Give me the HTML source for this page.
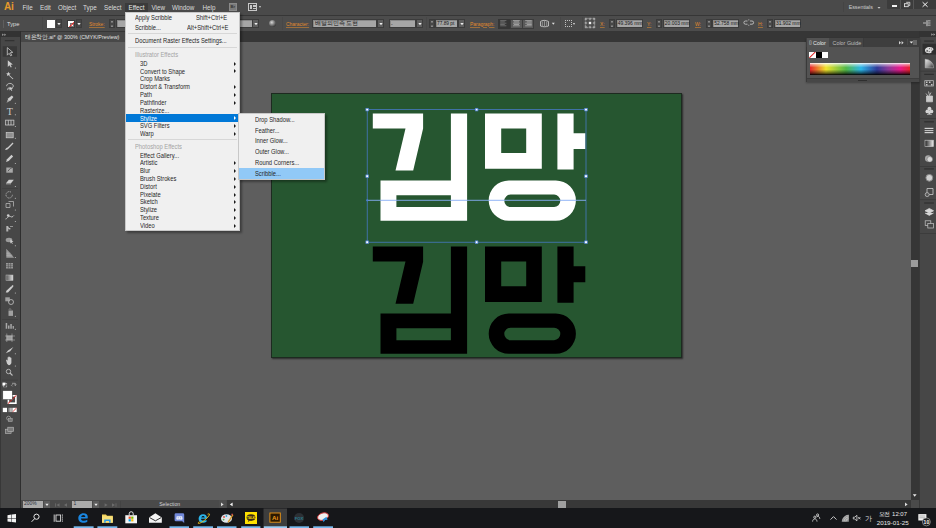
<!DOCTYPE html>
<html><head><meta charset="utf-8">
<style>
*{margin:0;padding:0;box-sizing:border-box}
html,body{width:936px;height:528px;overflow:hidden;background:#5e5e5e;font-family:"Liberation Sans",sans-serif}
.a{position:absolute}
.t{position:absolute;white-space:nowrap;line-height:1}
#menubar{left:0;top:0;width:936px;height:15.5px;background:#4a4a4a;border-bottom:1.3px solid #363636}
.mi{position:absolute;top:4.5px;font-size:6.3px;color:#dcdcdc;line-height:1}
#ctrl{left:0;top:15.5px;width:936px;height:16px;background:#4c4c4c;border-bottom:.6px solid #444}
.ol{color:#e08a2e;text-decoration:underline;text-decoration-color:rgba(224,138,46,.55);font-size:5.5px;transform:scaleX(.9);transform-origin:0 0}
.inp{position:absolute;background:#b8b8b8;height:9px;top:19px}
.dd{position:absolute;background:#464646;height:9px;top:19px;width:6px}
.dd:after{content:"";position:absolute;left:1.5px;top:3.5px;border-left:1.5px solid transparent;border-right:1.5px solid transparent;border-top:2px solid #ddd}
#canvas{left:21px;top:41.6px;width:890px;height:458px;background:#5e5e5e}
#tabbar{left:20px;top:31px;width:900px;height:11px;background:#363636}
#tab{left:21px;top:31.8px;width:110px;height:9.8px;background:#484848}
#tools{left:0;top:31px;width:21px;height:477px;background:#474747;border-left:1px solid #383838;border-right:1.4px solid #2e2e2e}
#toolhdr{left:0;top:31px;width:20px;height:6px;background:#333}
#artboard{left:271px;top:93px;width:411px;height:264.7px;background:#265630;border:1px solid #1d2a20;box-shadow:1px 1px 1.5px rgba(0,0,0,.55)}
#status{left:21px;top:500px;width:890px;height:8px;background:#4a4a4a}
#taskbar{left:0;top:508px;width:936px;height:20px;background:#16171a}
#dock{left:919px;top:31px;width:17px;height:477px;background:#474747;border-left:1px solid #383838}
#vscroll{left:911px;top:42px;width:9px;height:458px;background:#363636;border-right:1px solid #2c2c2c}
#menu{left:125px;top:12px;width:115px;height:219px;background:#f0f0f0;border:1px solid #c8c8c8;box-shadow:2px 2px 2px rgba(0,0,0,.35)}
.m{position:absolute;font-size:6.3px;color:#262626;line-height:1;white-space:nowrap;transform:scaleX(.92);transform-origin:0 0}
.g{color:#a3a3a3}
.arr{position:absolute;left:109px;width:0;height:0;border-top:2px solid transparent;border-bottom:2px solid transparent;border-left:2px solid #222}
.sep{position:absolute;left:3px;width:107px;height:1px;background:#d4d4d4}
#sub{left:238px;top:113px;width:87px;height:67px;background:#f0f0f0;border:1px solid #c8c8c8;box-shadow:2px 2px 2px rgba(0,0,0,.35)}
</style></head><body>

<!-- menubar -->
<div id="menubar" class="a"></div>
<div class="t" style="left:4px;top:2px;font-size:10px;font-weight:bold;color:#e59a2c;letter-spacing:-0.3px">Ai</div>
<div class="mi" style="left:22.5px">File</div>
<div class="mi" style="left:40px">Edit</div>
<div class="mi" style="left:58px">Object</div>
<div class="mi" style="left:83px">Type</div>
<div class="mi" style="left:104px">Select</div>
<div class="a" style="left:125px;top:3px;width:23px;height:9px;background:#3b3b3b"></div>
<div class="mi" style="left:128.5px;color:#e8e8e8">Effect</div>
<div class="mi" style="left:151.5px">View</div>
<div class="mi" style="left:172px">Window</div>
<div class="mi" style="left:202.5px">Help</div>
<div class="a" style="left:229px;top:3px;width:8px;height:8px;background:#7a7a7a;border:1px solid #8a8a8a"></div>
<div class="t" style="left:230.5px;top:5px;font-size:4px;color:#333;font-weight:bold">Br</div>
<div class="a" style="left:248px;top:3px;width:9px;height:8px;border:1px solid #c8c8c8"></div>
<div class="a" style="left:250px;top:5px;width:2px;height:4px;background:#c8c8c8"></div>
<div class="a" style="left:253px;top:5px;width:3px;height:1.5px;background:#c8c8c8"></div>
<div class="a" style="left:253px;top:7.5px;width:3px;height:1.5px;background:#c8c8c8"></div>
<div class="a" style="left:258.5px;top:6px;border-left:1.5px solid transparent;border-right:1.5px solid transparent;border-top:2px solid #ccc"></div>
<div class="a" style="left:843px;top:2px;width:1px;height:10px;background:#444"></div>
<div class="t" style="left:848.7px;top:4.6px;font-size:5.3px;color:#cfcfcf">Essentials</div>
<svg class="a" style="left:877px;top:6px" width="4" height="4" viewBox="0 0 4 4"><path d="M.5 1H3.5L2 2.8Z" fill="#ccc"/></svg>
<div class="a" style="left:887px;top:0;width:49px;height:9px;background:#3c3c3c;border-radius:0 0 0 1px"></div>
<div class="a" style="left:900px;top:0;width:1px;height:9px;background:#555"></div>
<div class="a" style="left:913px;top:0;width:1px;height:9px;background:#555"></div>
<div class="a" style="left:892px;top:5px;width:5px;height:1.5px;background:#f0f0f0"></div>
<svg class="a" style="left:903px;top:1px" width="9" height="7" viewBox="903 1 9 7"><path d="M906.2 2.3h3.6v3.2h-1.2" fill="none" stroke="#eee" stroke-width=".8"/><rect x="904.4" y="3.7" width="3.8" height="3" fill="#4a4a4a" stroke="#eee" stroke-width=".8"/></svg>
<svg class="a" style="left:921px;top:1px" width="8" height="7" viewBox="921 1 8 7"><path d="M922.6 2.2l5 4.6m0-4.6l-5 4.6" stroke="#f4f4f4" stroke-width="1"/></svg>

<!-- control bar -->
<div id="ctrl" class="a"></div>
<div class="a" style="left:2.5px;top:19.6px;width:1.5px;height:8px;background:#3a3a3a;border-right:.5px solid #5e5e5e"></div>
<div class="t" style="left:7px;top:21.8px;font-size:5.8px;color:#dedede">Type</div>
<div class="a" style="left:42px;top:17px;width:1px;height:13px;background:#474747"></div>
<div class="a" style="left:47px;top:19.9px;width:8.1px;height:8.1px;background:#fff"></div>
<div class="a" style="left:55.8px;top:18.8px;width:6.2px;height:9.3px;background:#464646;border:1px solid #3c3c3c"></div><svg class="a" style="left:56.9px;top:21.5px" width="4" height="4" viewBox="0 0 4 4"><path d="M.3 1H3.7L2 3.2Z" fill="#eee"/></svg>
<div class="a" style="left:67px;top:19.8px;width:8.3px;height:8.3px;background:#fff;overflow:hidden;border:.5px solid #3a3a3a"><div class="a" style="left:2.2px;top:2.2px;width:3.6px;height:3.6px;border:.6px solid #777"></div><div class="a" style="left:-2px;top:3.7px;width:12px;height:1px;background:#e0201e;transform:rotate(-45deg)"></div></div>
<div class="a" style="left:75.7px;top:18.8px;width:6.3px;height:9.3px;background:#464646;border:1px solid #3c3c3c"></div><svg class="a" style="left:76.85000000000001px;top:21.5px" width="4" height="4" viewBox="0 0 4 4"><path d="M.3 1H3.7L2 3.2Z" fill="#eee"/></svg>
<div class="t ol" style="left:89.3px;top:21.5px">Stroke:</div>
<div class="a" style="left:108.8px;top:19px;width:6px;height:9px;background:#474747;border:1px solid #3a3a3a"></div><svg class="a" style="left:109.8px;top:19.8px" width="4" height="3" viewBox="0 0 4 3"><path d="M.9 2.3H3.1L2 1Z" fill="#e0e0e0"/></svg><svg class="a" style="left:109.8px;top:24.6px" width="4" height="3" viewBox="0 0 4 3"><path d="M.9 .7H3.1L2 2Z" fill="#e0e0e0"/></svg>
<div class="a" style="left:115.5px;top:18.8px;width:137px;height:9.3px;background:#a6a6a6;border:1px solid #3c3c3c;box-shadow:inset 1px 1px 0 #888"></div>
<div class="a" style="left:252.4px;top:18.8px;width:7px;height:9.3px;background:#5e5e5e;border:1px solid #3c3c3c"></div><svg class="a" style="left:253.9px;top:21.5px" width="4" height="4" viewBox="0 0 4 4"><path d="M.3 1H3.7L2 3.2Z" fill="#eee"/></svg>
<div class="a" style="left:269.3px;top:19.6px;width:7.2px;height:7.2px;border-radius:50%;background:radial-gradient(circle at 40% 35%,#d8d8d8 0,#8a8a8a 35%,#3a3a3a 75%)"></div>
<div class="a" style="left:281.5px;top:17px;width:1px;height:13px;background:#474747"></div>
<div class="t ol" style="left:285.7px;top:21.5px">Character:</div>
<div class="a" style="left:312.3px;top:18.8px;width:65px;height:9.3px;background:#a6a6a6;border:1px solid #3c3c3c;box-shadow:inset 1px 1px 0 #888"></div>
<div class="t" style="left:314.9px;top:21.3px;font-size:5.6px;color:#151515">배달의민족 도현</div>
<div class="a" style="left:377px;top:18.8px;width:7.4px;height:9.3px;background:#5e5e5e;border:1px solid #3c3c3c"></div><svg class="a" style="left:378.7px;top:21.5px" width="4" height="4" viewBox="0 0 4 4"><path d="M.3 1H3.7L2 3.2Z" fill="#eee"/></svg>
<div class="a" style="left:388.7px;top:18.8px;width:27.5px;height:9.3px;background:#a6a6a6;border:1px solid #3c3c3c;box-shadow:inset 1px 1px 0 #888"></div>
<div class="t" style="left:391px;top:21.8px;font-size:5px;color:#1e1e1e">-</div>
<div class="a" style="left:416px;top:18.8px;width:7.4px;height:9.3px;background:#5e5e5e;border:1px solid #3c3c3c"></div><svg class="a" style="left:417.7px;top:21.5px" width="4" height="4" viewBox="0 0 4 4"><path d="M.3 1H3.7L2 3.2Z" fill="#eee"/></svg>
<div class="a" style="left:426.3px;top:17px;width:1px;height:13px;background:#474747"></div>
<div class="a" style="left:428.6px;top:19px;width:6px;height:9px;background:#474747;border:1px solid #3a3a3a"></div><svg class="a" style="left:429.6px;top:19.8px" width="4" height="3" viewBox="0 0 4 3"><path d="M.9 2.3H3.1L2 1Z" fill="#e0e0e0"/></svg><svg class="a" style="left:429.6px;top:24.6px" width="4" height="3" viewBox="0 0 4 3"><path d="M.9 .7H3.1L2 2Z" fill="#e0e0e0"/></svg>
<div class="a" style="left:435.2px;top:18.8px;width:23px;height:9.3px;background:#a6a6a6;border:1px solid #3c3c3c;box-shadow:inset 1px 1px 0 #888"></div>
<div class="t" style="left:437px;top:21.6px;font-size:4.8px;color:#161616">77.89 pt</div>
<div class="a" style="left:458px;top:18.8px;width:7px;height:9.3px;background:#5e5e5e;border:1px solid #3c3c3c"></div><svg class="a" style="left:459.5px;top:21.5px" width="4" height="4" viewBox="0 0 4 4"><path d="M.3 1H3.7L2 3.2Z" fill="#eee"/></svg>
<div class="t ol" style="left:469.9px;top:21.5px">Paragraph:</div>
<div class="a" style="left:497.6px;top:18.5px;width:36.8px;height:10.1px;background:#5a5a5a;border:1px solid #3c3c3c"></div>
<div class="a" style="left:497.6px;top:18.5px;width:12.4px;height:10.1px;background:#363636"></div>
<svg class="a" style="left:497px;top:18px" width="38" height="11" viewBox="497 18 38 11"><g stroke-width=".55"><path d="M500.2 20.6h6.2M500.2 21.9h4.6M500.2 23.2h6.2M500.2 24.5h4.6M500.2 25.8h6.2" stroke="#999"/><path d="M513 20.6h6.8M513.8 21.9h5.2M513 23.2h6.8M513.8 24.5h5.2M513 25.8h6.8" stroke="#d4d4d4"/><path d="M525.2 20.6h6.6M526.8 21.9h5M525.2 23.2h6.6M526.8 24.5h5M525.2 25.8h6.6" stroke="#d4d4d4"/></g></svg><div class="a" style="left:510px;top:18.5px;width:1px;height:10.1px;background:#3c3c3c"></div><div class="a" style="left:522.2px;top:18.5px;width:1px;height:10.1px;background:#3c3c3c"></div>



<svg class="a" style="left:538px;top:17px" width="20" height="13" viewBox="538 17 20 13"><path d="M540.5 21.5c1.5-1.5 5.6-1.5 8 0v4.5c-2.5 1-5.5 1-8 0z" fill="none" stroke="#d0d0d0" stroke-width=".8"/><path d="M542.3 21.5v4.6M544.5 21v5.2M546.7 21.5v4.6" stroke="#d0d0d0" stroke-width=".5"/><path d="M551.8 22.8h3l-1.5 2z" fill="#ddd"/></svg>
<div class="a" style="left:560px;top:17px;width:1px;height:13px;background:#474747"></div>
<div class="a" style="left:564.6px;top:19.6px;width:7.5px;height:7.5px;border:1px dotted #c0c0c0"></div>
<div class="a" style="left:573.3px;top:22.6px;border-left:1.5px solid transparent;border-right:1.5px solid transparent;border-top:2px solid #ddd"></div>
<div class="a" style="left:582px;top:17px;width:1px;height:13px;background:#474747"></div>
<svg class="a" style="left:584px;top:17px" width="12" height="12" viewBox="584 17 12 12"><g fill="none" stroke="#c8c8c8" stroke-width=".6"><rect x="585.3" y="18.3" width="9.4" height="9.4" stroke-dasharray=".9 .6"/><circle cx="586" cy="19" r=".9"/><circle cx="590" cy="19" r=".9"/><circle cx="594" cy="19" r=".9"/><circle cx="586" cy="23" r=".9"/><circle cx="594" cy="23" r=".9"/><circle cx="586" cy="27" r=".9"/><circle cx="590" cy="27" r=".9"/><circle cx="594" cy="27" r=".9"/></g><rect x="588.8" y="21.8" width="2.4" height="2.4" fill="#eee"/></svg>
<div class="t ol" style="left:599.8px;top:21.5px">X:</div>
<div class="a" style="left:608.5px;top:19px;width:6px;height:9px;background:#474747;border:1px solid #3a3a3a"></div><svg class="a" style="left:609.5px;top:19.8px" width="4" height="3" viewBox="0 0 4 3"><path d="M.9 2.3H3.1L2 1Z" fill="#e0e0e0"/></svg><svg class="a" style="left:609.5px;top:24.6px" width="4" height="3" viewBox="0 0 4 3"><path d="M.9 .7H3.1L2 2Z" fill="#e0e0e0"/></svg>
<div class="a" style="left:615.7px;top:18.8px;width:27.4px;height:9.3px;background:#a6a6a6;border:1px solid #3c3c3c;box-shadow:inset 1px 1px 0 #888"></div>
<div class="t" style="left:617.7px;top:21.6px;font-size:4.95px;color:#161616">49.396 mm</div>
<div class="t ol" style="left:647.1px;top:21.5px">Y:</div>
<div class="a" style="left:656px;top:19px;width:6px;height:9px;background:#474747;border:1px solid #3a3a3a"></div><svg class="a" style="left:657.0px;top:19.8px" width="4" height="3" viewBox="0 0 4 3"><path d="M.9 2.3H3.1L2 1Z" fill="#e0e0e0"/></svg><svg class="a" style="left:657.0px;top:24.6px" width="4" height="3" viewBox="0 0 4 3"><path d="M.9 .7H3.1L2 2Z" fill="#e0e0e0"/></svg>
<div class="a" style="left:662.8px;top:18.8px;width:27.4px;height:9.3px;background:#a6a6a6;border:1px solid #3c3c3c;box-shadow:inset 1px 1px 0 #888"></div>
<div class="t" style="left:664.8px;top:21.6px;font-size:4.95px;color:#161616">20.003 mm</div>
<div class="t ol" style="left:694.7px;top:21.5px">W:</div>
<div class="a" style="left:705.5px;top:19px;width:6px;height:9px;background:#474747;border:1px solid #3a3a3a"></div><svg class="a" style="left:706.5px;top:19.8px" width="4" height="3" viewBox="0 0 4 3"><path d="M.9 2.3H3.1L2 1Z" fill="#e0e0e0"/></svg><svg class="a" style="left:706.5px;top:24.6px" width="4" height="3" viewBox="0 0 4 3"><path d="M.9 .7H3.1L2 2Z" fill="#e0e0e0"/></svg>
<div class="a" style="left:712.2px;top:18.8px;width:26.9px;height:9.3px;background:#a6a6a6;border:1px solid #3c3c3c;box-shadow:inset 1px 1px 0 #888"></div>
<div class="t" style="left:714.2px;top:21.6px;font-size:4.95px;color:#161616">52.758 mm</div>
<div class="t ol" style="left:758.2px;top:21.5px">H:</div>
<div class="a" style="left:767.2px;top:19px;width:6px;height:9px;background:#474747;border:1px solid #3a3a3a"></div><svg class="a" style="left:768.2px;top:19.8px" width="4" height="3" viewBox="0 0 4 3"><path d="M.9 2.3H3.1L2 1Z" fill="#e0e0e0"/></svg><svg class="a" style="left:768.2px;top:24.6px" width="4" height="3" viewBox="0 0 4 3"><path d="M.9 .7H3.1L2 2Z" fill="#e0e0e0"/></svg>
<div class="a" style="left:773.9px;top:18.8px;width:27.6px;height:9.3px;background:#a6a6a6;border:1px solid #3c3c3c;box-shadow:inset 1px 1px 0 #888"></div>
<div class="t" style="left:775.9px;top:21.6px;font-size:4.95px;color:#161616">31.902 mm</div>
<svg class="a" style="left:743px;top:18px" width="12" height="11" viewBox="743 18 12 11"><g fill="none" stroke="#d0d0d0" stroke-width=".8"><path d="M747.5 21h-2a1.6 1.6 0 0 0 0 3.2h2M750 21h2a1.6 1.6 0 0 1 0 3.2h-2"/><path d="M748.8 19.2v1.3M748.8 24.7v1.3" stroke-width=".6"/></g></svg>
<svg class="a" style="left:920px;top:18px" width="14" height="11" viewBox="920 18 14 11"><g fill="#d8d8d8"><rect x="923" y="22.6" width="3" height=".8"/><rect x="926.5" y="20.2" width="1" height="6"/><rect x="928" y="20.5" width="2.5" height=".8"/><rect x="928" y="22.6" width="2.5" height=".8"/><rect x="928" y="24.7" width="2.5" height=".8"/></g></svg>
<!-- canvas -->
<div id="canvas" class="a"></div>
<div id="artboard" class="a"></div>

<div id="tabbar" class="a"></div>
<div id="tab" class="a"></div>
<div class="t" style="left:25.3px;top:34.9px;font-size:5.7px;color:#e2e2e2;transform:scaleX(.95);transform-origin:0 0">태은착안.ai* @ 300% (CMYK/Preview)</div>
<div id="vscroll" class="a"></div>
<div class="a" style="left:910.8px;top:259.7px;width:7.7px;height:7.4px;background:#9c9c9c"></div>
<div id="status" class="a"></div>
<div class="a" style="left:22.6px;top:500.9px;width:20.6px;height:6.9px;background:#ababab"></div>
<div class="t" style="left:24px;top:502.3px;font-size:4.9px;color:#2a3040">200%</div>
<div class="a" style="left:43.8px;top:500.9px;width:6.2px;height:6.9px;background:#5c5c5c"></div>
<svg class="a" style="left:44.9px;top:502.6px" width="4" height="4" viewBox="0 0 4 4"><path d="M.3 .8H3.7L2 3Z" fill="#eee"/></svg>
<svg class="a" style="left:54px;top:501.5px" width="64" height="6" viewBox="54 501.5 64 6"><g fill="#6c6c6c"><rect x="55" y="502.8" width=".8" height="3.4"/><path d="M59.5 502.8v3.4l-3-1.7z"/><path d="M67 502.8v3.4l-3-1.7z"/><path d="M104.6 502.8v3.4l3-1.7z"/><path d="M112 502.8v3.4l3-1.7z"/><rect x="115.6" y="502.8" width=".8" height="3.4"/></g></svg>
<div class="a" style="left:72px;top:500.9px;width:20px;height:6.9px;background:#ababab"></div>
<div class="t" style="left:73.5px;top:502.3px;font-size:4.9px;color:#2a3040">1</div>
<div class="a" style="left:92.8px;top:500.9px;width:6.2px;height:6.9px;background:#5c5c5c"></div>
<svg class="a" style="left:93.9px;top:502.6px" width="4" height="4" viewBox="0 0 4 4"><path d="M.3 .8H3.7L2 3Z" fill="#eee"/></svg>
<div class="a" style="left:120px;top:500.5px;width:1px;height:7px;background:#444"></div>
<div class="t" style="left:159.2px;top:502.2px;font-size:5.1px;color:#d2d2d2">Selection</div>
<div class="a" style="left:218.5px;top:500px;width:7.5px;height:7.7px;background:#4e4e4e"></div>
<svg class="a" style="left:220px;top:502px" width="12" height="5" viewBox="220 502 12 5"><path d="M221 502.6v3.6l2.6-1.8z" fill="#ddd"/><path d="M232 502.4v4l-2.8-2z" fill="#f4f4f4"/></svg>
<div class="a" style="left:226.8px;top:499.6px;width:684.2px;height:8.4px;background:#383838"></div>
<svg class="a" style="left:229px;top:502px" width="5" height="5" viewBox="229 502 5 5"><path d="M232.6 502.5v3.8l-2.8-1.9z" fill="#f4f4f4"/></svg>
<div class="a" style="left:557.9px;top:500.6px;width:8.1px;height:7.2px;background:#a0a0a0"></div>
<svg class="a" style="left:904px;top:502px" width="5" height="5" viewBox="904 502 5 5"><path d="M905 502.6v3.6l2.6-1.8z" fill="#ddd"/></svg>
<div class="a" style="left:911px;top:499.6px;width:9px;height:8.4px;background:#4a4a4a"></div>
<svg class="a" style="left:912px;top:493px" width="6" height="5" viewBox="912 493 6 5"><path d="M912.8 494.2h3.8l-1.9 2.6z" fill="#e8e8e8"/></svg>
<div id="dock" class="a"></div>
<div class="a" style="left:919px;top:31px;width:17px;height:6px;background:#333"></div>
<div id="tools" class="a"></div>
<div id="toolhdr" class="a"></div>

<svg class="a" style="left:0;top:0" width="936" height="528" viewBox="0 0 936 528">
  <g id="kim" fill="#fff" fill-rule="evenodd">
    <path d="M372.8 113.4H423.1V128.6L413.2 170.6H395.5L405.5 128.5H372.8Z"/>
    <path d="M450.9 113.4H467.1V220.7H380.5V180.4H450.9ZM396.4 195.2V207.1H450.9V195.2Z"/>
    <path d="M485 113.4H541.8V168.8H485ZM501.2 128.4V153.1H526.2V128.4Z"/>
    <path d="M557.4 113.4H573.6V133.2H585.3V149.1H573.6V169.6H557.4Z"/>
    <path d="M508.85 180.4H555.75A20.15 20.15 0 0 1 555.75 220.7H508.85A20.15 20.15 0 0 1 508.85 180.4ZM510.55 194.6A6.25 6.25 0 0 0 510.55 207.1H554.05A6.25 6.25 0 0 0 554.05 194.6Z"/>
  </g>
  <g fill="#000" fill-rule="evenodd" transform="translate(0 133.1)">
    <path d="M372.8 113.4H423.1V128.6L413.2 170.6H395.5L405.5 128.5H372.8Z"/>
    <path d="M450.9 113.4H467.1V220.7H380.5V180.4H450.9ZM396.4 195.2V207.1H450.9V195.2Z"/>
    <path d="M485 113.4H541.8V168.8H485ZM501.2 128.4V153.1H526.2V128.4Z"/>
    <path d="M557.4 113.4H573.6V133.2H585.3V149.1H573.6V169.6H557.4Z"/>
    <path d="M508.85 180.4H555.75A20.15 20.15 0 0 1 555.75 220.7H508.85A20.15 20.15 0 0 1 508.85 180.4ZM510.55 194.6A6.25 6.25 0 0 0 510.55 207.1H554.05A6.25 6.25 0 0 0 554.05 194.6Z"/>
  </g>

  <g stroke="#4a7fd8" stroke-width="0.7" fill="none">
    <rect x="367.2" y="109.6" width="218.8" height="132.6"/>
    <line x1="367.2" y1="200.3" x2="586" y2="200.3" stroke="#86adf6" stroke-width="0.9"/>
  </g>
  <g fill="#fff" stroke="#4a7fd8" stroke-width="0.7">
    <rect x="365.9" y="108.3" width="2.6" height="2.6"/>
    <rect x="475.3" y="108.3" width="2.6" height="2.6"/>
    <rect x="584.7" y="108.3" width="2.6" height="2.6"/>
    <rect x="365.9" y="174.9" width="2.6" height="2.6"/>
    <rect x="584.7" y="174.9" width="2.6" height="2.6"/>
    <rect x="365.9" y="240.9" width="2.6" height="2.6"/>
    <rect x="475.3" y="240.9" width="2.6" height="2.6"/>
    <rect x="584.7" y="240.9" width="2.6" height="2.6"/>
  </g>
  <circle cx="367.2" cy="200.3" r="1.1" fill="#4a7fd8"/>
</svg>



<!-- tool icons -->
<svg class="a" style="left:0;top:31px" width="20" height="420" viewBox="0 31 20 420">
  <path d="M2.4 33.4v2.6l1.3-1.3zM4.5 33.4v2.6l1.3-1.3z" fill="#c8c8c8"/>
  <rect x="4.8" y="40.2" width="9.6" height="1" fill="#2d2d2d"/>
  <rect x="2.7" y="46.2" width="14.3" height="10.6" fill="#383838"/>
  <g fill="#cdcdcd" stroke="none">
    <path d="M7.3 47.6v7.6l1.8-1.9 1.6 2.6 1.1-.6-1.5-2.6 2.5-.3z" fill="none" stroke="#c8c8c8" stroke-width=".8"/>
    <path d="M7.8 60.2v6.8l1.6-1.7 1.4 2.3 1-.6-1.3-2.3 2.3-.2z"/>
    <path d="M8.4 71.8l.7 1.5 1.6.2-1.2 1 .4 1.6-1.5-.8-1.4.8.3-1.6-1.2-1 1.6-.2z"/>
    <path d="M9.8 75.5l3.6 3.2-.6.6-3.5-3.2z"/>
    <path d="M6.6 86.2c0-1.8 1.6-2.8 3.3-2.8s3.4 1 3.4 2.6-1.6 2.4-3.4 2.4c-.8 0-1.3-.2-1.7-.5l-.6 2.2" fill="none" stroke="#c2c2c2" stroke-width=".9"/>
    <path d="M9.5 86.8l3.6 2-1.7.3.9 1.6-.7.4-.9-1.6-1.2 1.1z"/>
    <path d="M6.6 102.8l1.8-4.6 3.4-2.8 1.6 1.6-2.8 3.4z"/>
    <path d="M6.6 102.8l2.5-2.5" stroke="#484848" stroke-width=".5"/>
    <text x="9.8" y="115" font-size="10" font-family="Liberation Serif" text-anchor="middle" fill="#cdcdcd">T</text>
    <path d="M5.2 120.2h9M5.2 125h9M5.6 120.2v4.8M8.3 120.2v4.8M11 120.2v4.8M13.8 120.2v4.8" stroke="#cdcdcd" stroke-width=".8" fill="none"/>
    <rect x="6.2" y="132.6" width="7" height="5.2" fill="#8f8f8f" stroke="#cdcdcd" stroke-width=".7"/>
    <path d="M5.2 150c1.6.1 2.8-.4 3.4-1.4l4.9-5.2-.9-.8-5 5c-1.2.2-2 .9-2.4 2.4z"/>
    <path d="M6 162l1-2.8 4.5-4.4 1.6 1.6-4.4 4.5z"/>
    <path d="M6.3 167.5h6.5v5.2H6.3z" fill="#a8a8a8"/>
    <path d="M8 171.2c1.5-2.6 3.4-3.3 5.6-4.2" stroke="#484848" stroke-width=".8" fill="none"/>
    <path d="M6 183.2l2.8-3.4h5l-2.8 3.4z"/>
    <path d="M6 183.2v1.2h5v-1.2" fill="#999"/>
    <rect x="2" y="188" width="16" height=".6" fill="#3c3c3c"/>
    <path d="M12.4 194.8a3.2 3.2 0 1 1-1-2.3" fill="none" stroke="#c2c2c2" stroke-width=".8" stroke-dasharray="1.1 .6"/>
    <path d="M6 203.5h4v4H6z M8.5 201.5h5v5" fill="none" stroke="#c2c2c2" stroke-width=".7"/>
    <path d="M5.5 219c1.5-.2 2-1.6 3-2.4 1.2-1 2.5.6 3.5.4 1-.2 1.3-1.1 1.8-1.5" fill="none" stroke="#c2c2c2" stroke-width="1"/>
    <circle cx="8.2" cy="215.5" r="1.3"/>
    <path d="M6.3 226h2v5.6h-2z M10 226h3v.8h-3zM12.4 228v3.5" fill="#b0b0b0"/>
    <path d="M7 226.5l4 2.5-2 .5" />
    <ellipse cx="9" cy="240" rx="3.3" ry="2.2" fill="#9a9a9a"/>
    <path d="M10.3 239.6l3.2 2.2-1.6.3.8 1.5-.6.3-.8-1.5-1 1z"/>
    <path d="M6.3 249.2v8.5h7.4z" fill="#9a9a9a"/>
    <path d="M6.3 249.2l3.6 3.6 3.8 4.9M6.3 253.2h4M6.3 255.2h6" stroke="#c8c8c8" stroke-width=".4" fill="none"/>
    <rect x="6" y="263" width="7" height="5.5" fill="#9a9a9a"/>
    <path d="M6 264.8h7M6 266.6h7M8.4 263v5.5M10.6 263v5.5" stroke="#484848" stroke-width=".5"/>
    <defs><linearGradient id="tg"><stop offset="0" stop-color="#555"/><stop offset="1" stop-color="#ddd"/></linearGradient></defs>
    <rect x="6" y="275" width="7" height="5.5" fill="url(#tg)" stroke="#bbb" stroke-width=".5"/>
    <path d="M5.8 292.6l.6-1.8 4.8-4.6 1.4 1.4-4.6 4.8z"/>
    <path d="M11.2 286.2l1.4-1.2 1 1-1.2 1.4z"/>
    <rect x="5.3" y="297.3" width="4.5" height="4" fill="#a0a0a0"/>
    <circle cx="11" cy="302" r="2.5" fill="none" stroke="#c2c2c2" stroke-width=".8"/>
    <path d="M8.5 310.5h4.5v5.4H8.5z" fill="#a0a0a0"/>
    <path d="M9 309.5c.4-1 1.5-1 2 0" fill="none" stroke="#c2c2c2" stroke-width=".6"/>
    <rect x="2" y="319" width="16" height=".6" fill="#3c3c3c"/>
    <path d="M5.7 323h1.5v5.8H5.7zM8 325.4h1.5v3.4H8zM10.3 324h1.5v4.8h-1.5zM12.6 326h1.3v2.8h-1.3z" fill="#a8a8a8"/>
    <rect x="6.5" y="335.5" width="6" height="4.8" fill="#9a9a9a"/>
    <path d="M5 336h10M5 340h10M6.8 333.5v8.5M12 333.5v8.5" stroke="#c2c2c2" stroke-width=".5"/>
    <path d="M5.8 353.3l2.2-2.8 5.4-3.4-3.2 4.2z"/>
    <path d="M6.3 361c-.5-1 .2-1.5.8-1l.5.8v-3.2c0-.6.9-.6.9 0v2.4-3c0-.6 1-.6 1 0v3-2.6c0-.6 1-.6 1 0v2.8-2c0-.6.9-.6.9 0v4.4c0 1.4-1 2.6-2.6 2.6H9.2c-1 0-1.8-.8-2.2-1.6z"/>
    <circle cx="8.5" cy="371.5" r="2.2" fill="none" stroke="#bdbdbd" stroke-width=".9"/>
    <path d="M10 373l2.5 2.5" stroke="#bdbdbd" stroke-width="1.1"/>
    <rect x="2" y="379.8" width="16" height=".6" fill="#3c3c3c"/>
  </g>
  <g fill="#d0d0d0">
    <circle cx="15.4" cy="67.9" r=".5"/><circle cx="15.3" cy="103.3" r=".5"/><circle cx="15.3" cy="114.8" r=".5"/>
    <circle cx="15.3" cy="126.5" r=".5"/><circle cx="15.3" cy="138.2" r=".5"/><circle cx="15.3" cy="163.5" r=".5"/>
    <circle cx="15.3" cy="186.5" r=".5"/><circle cx="15.3" cy="198.3" r=".5"/><circle cx="15.3" cy="210" r=".5"/>
    <circle cx="15.3" cy="221.5" r=".5"/><circle cx="15.3" cy="245.8" r=".5"/><circle cx="15.3" cy="257.5" r=".5"/>
    <circle cx="15.3" cy="293" r=".5"/><circle cx="15.3" cy="316.3" r=".5"/><circle cx="15.3" cy="329.2" r=".5"/>
    <circle cx="15.3" cy="353.8" r=".5"/><circle cx="15.3" cy="366" r=".5"/>
  </g>
  <rect x="3.2" y="383.3" width="3.6" height="3.6" fill="#111" stroke="#ddd" stroke-width=".5"/>
  <rect x="2.5" y="382.6" width="3" height="3" fill="#fff"/>
  <path d="M12 383.3h3.3v2.2M14.3 384.5l1 1 1-1M12.5 384.3l-1 1 1 1" fill="none" stroke="#ccc" stroke-width=".6"/>
  <rect x="7.6" y="395" width="9.1" height="9" fill="#fff"/>
  <rect x="9.2" y="396.6" width="5.9" height="5.8" fill="#484848"/>
  <path d="M7.9 403.7l8.5-8.4" stroke="#e0201e" stroke-width="1"/>
  <rect x="2.8" y="390.7" width="9.5" height="8.9" fill="#fff" stroke="#3a3a3a" stroke-width=".5"/>
  <rect x="2.8" y="407.8" width="4.2" height="4.3" fill="#fff"/>
  <rect x="7.5" y="407.8" width="4.2" height="4.3" fill="url(#tg)"/>
  <rect x="12.4" y="407.8" width="4.3" height="4.3" fill="#fff"/>
  <path d="M12.6 411.9l3.9-3.9" stroke="#e0201e" stroke-width=".8"/>
  <circle cx="8.6" cy="418.2" r="2" fill="none" stroke="#aaa" stroke-width=".7"/>
  <rect x="8.6" y="418.6" width="3.6" height="2.8" fill="#777" stroke="#aaa" stroke-width=".6"/>
  <rect x="5.3" y="429.2" width="5.8" height="4.3" fill="#6a6a6a" stroke="#bbb" stroke-width=".6"/>
  <rect x="7.8" y="427.2" width="5.8" height="4.3" fill="#7a7a7a" stroke="#bbb" stroke-width=".6"/>
</svg>

<!-- color panel -->
<div class="a" style="left:806px;top:37.5px;width:113.5px;height:44.6px;background:#535353;border:1px solid #3a3a3a;box-shadow:0 1px 2px rgba(0,0,0,.3)"></div>
<div class="a" style="left:806px;top:37.5px;width:113.5px;height:9px;background:#3e3e3e"></div>
<div class="a" style="left:806.5px;top:38px;width:22.5px;height:8.5px;background:#535353"></div>
<div class="a" style="left:829px;top:38px;width:34.5px;height:8.5px;background:#454545;border-right:1px solid #3a3a3a"></div>
<div class="t" style="left:809px;top:40.3px;font-size:5.2px;color:#e6e6e6">&#x25AF;</div>
<div class="t" style="left:813px;top:40.5px;font-size:5.4px;color:#e6e6e6">Color</div>
<div class="t" style="left:832.5px;top:40.5px;font-size:5.4px;color:#bcbcbc">Color Guide</div>
<svg class="a" style="left:898px;top:40px" width="7" height="6" viewBox="898 40 7 6"><path d="M899 41v3.6l2-1.8zM901.6 41v3.6l2-1.8z" fill="#d4d4d4"/></svg>
<div class="a" style="left:907px;top:39px;width:1px;height:6px;background:#4a4a4a"></div>
<svg class="a" style="left:909px;top:40px" width="5" height="5" viewBox="909 40 5 5"><path d="M909.6 41.6h3.6l-1.8 2z" fill="#e8e8e8"/></svg>
<div class="a" style="left:913.2px;top:40.3px;width:4px;height:4.4px;background:#666"></div>
<div class="a" style="left:809.4px;top:51.9px;width:6.3px;height:6.3px;background:#fff;overflow:hidden"><div class="a" style="left:-1.5px;top:2.6px;width:9.5px;height:1px;background:#e0201e;transform:rotate(-45deg)"></div></div>
<div class="a" style="left:815.7px;top:51.9px;width:6.1px;height:6.3px;background:#000"></div>
<div class="a" style="left:821.8px;top:51.9px;width:6.2px;height:6.3px;background:#fff"></div>
<div class="a" style="left:809.9px;top:63px;width:100.2px;height:11.9px;background:linear-gradient(to right,#e8232a 0%,#f0e32c 16%,#52b848 36%,#2cb6e8 51%,#2e3a98 67%,#8a3a9a 78%,#e8198a 90%,#e8232a 100%)"></div>
<div class="a" style="left:809.9px;top:63px;width:100.2px;height:11.9px;background:linear-gradient(to bottom,#fff 0%,rgba(255,255,255,.5) 12%,rgba(255,255,255,0) 38%,rgba(0,0,0,0) 55%,rgba(0,0,0,.55) 85%,#000 100%)"></div>
<div class="a" style="left:806.5px;top:78.2px;width:112.5px;height:3.9px;background:#474747;border-top:1px solid #3d3d3d"></div>
<div class="a" style="left:858px;top:80px;width:9px;height:1px;background:#2e2e2e"></div>
<!-- dock icons -->
<svg class="a" style="left:930px;top:32px" width="6" height="5" viewBox="930 32 6 5"><path d="M931.5 33.2v2.6l1.3-1.3zM933.6 33.2v2.6l1.3-1.3z" fill="#d0d0d0"/></svg>
<svg class="a" style="left:919px;top:31px" width="17" height="210" viewBox="919 31 17 210">
  <g fill="#2f2f2f">
    <rect x="924.2" y="40.5" width="9.7" height="1.2"/>
    <rect x="924.2" y="73.8" width="9.7" height="1.2"/>
    <rect x="924.2" y="121.2" width="9.7" height="1.2"/>
    <rect x="924.2" y="168.3" width="9.7" height="1.2"/>
    <rect x="924.2" y="202.4" width="9.7" height="1.2"/>
  </g>
  <g fill="#3a3a3a">
    <rect x="920" y="70.8" width="16" height="0.8"/>
    <rect x="920" y="118.2" width="16" height="0.8"/>
    <rect x="920" y="166.2" width="16" height="0.8"/>
    <rect x="920" y="199.3" width="16" height="0.8"/>
    <rect x="920" y="233" width="16" height="0.8"/>
  </g>
  
  <rect x="922.5" y="43.8" width="13.5" height="10.8" fill="#303030"/>
  <path d="M925 50.8c-.4-2.2 1.8-3.9 4.4-3.9 2.6 0 4.4 1.3 4 2.8-.3 1-1.5.8-1.8 1.5-.3.7.4 1.4-.8 1.8-2 .6-5.4.3-5.8-2.2z" fill="#d8d8d8"/>
  <ellipse cx="927.2" cy="50.9" rx=".9" ry=".6" fill="#303030"/><circle cx="929.6" cy="48.6" r=".55" fill="#555"/><circle cx="931.6" cy="49.1" r=".5" fill="#555"/><circle cx="929.2" cy="51.6" r=".6" fill="#555"/>
  <defs><linearGradient id="cg" x1="0" y1="0" x2="1" y2="1"><stop offset="0" stop-color="#e8e8e8"/><stop offset=".55" stop-color="#9a9a9a"/><stop offset="1" stop-color="#2a2a2a"/></linearGradient></defs>
  <path d="M925.2 59.2v8.6h8.4a8.4 8.6 0 0 0-8.4-8.6z" fill="url(#cg)" stroke="#c8c8c8" stroke-width=".5"/>
  <g fill="#c8c8c8"><rect x="924.8" y="80.7" width="8.5" height="5.3" fill="none" stroke="#c8c8c8" stroke-width=".7"/><rect x="926" y="81.5" width="1.5" height="1.5"/><rect x="929" y="81.5" width="1.5" height="1.5"/><rect x="926" y="84" width="1.5" height="1.5"/><rect x="931" y="84" width="1.5" height="1.5"/></g>
  <path d="M926.5 96h6v5.8h-6z M928.5 91.5l1 4 M931 92.5l-1.5 3 M926 93.5l2 2.5" fill="#c8c8c8" stroke="#c8c8c8" stroke-width=".8"/>
  <g fill="#d4d4d4"><circle cx="929.4" cy="108.6" r="1.9"/><circle cx="927.4" cy="111.4" r="1.9"/><circle cx="931.4" cy="111.4" r="1.9"/><path d="M928.9 110.5h1l.6 3.5h-2.2z"/><rect x="927" y="114" width="4.8" height=".6"/></g>
  <g fill="#d0d0d0"><rect x="924.6" y="127.8" width="8.8" height="1.2"/><rect x="924.6" y="130.1" width="8.8" height="1"/><rect x="924.6" y="132" width="8.8" height="1.2"/></g>
  <defs><linearGradient id="gr1"><stop offset="0" stop-color="#222"/><stop offset="1" stop-color="#eee"/></linearGradient></defs>
  <rect x="925" y="140.2" width="8.4" height="6.4" fill="url(#gr1)" stroke="#ccc" stroke-width=".6"/>
  <circle cx="928.2" cy="158.5" r="3.2" fill="#a8a8a8"/><circle cx="929.8" cy="159.3" r="2.8" fill="#d8d8d8" stroke="#666" stroke-width=".5"/>
  <circle cx="929.3" cy="177.8" r="3.4" fill="#cfcfcf" stroke="#888" stroke-width="1"/>
  <path d="M927 188.5h6v6h-6z" fill="none" stroke="#ccc" stroke-width=".8"/><circle cx="927.2" cy="194.6" r="2" fill="#555" stroke="#ccc" stroke-width=".7"/>
  <path d="M925 210.8l4.3-2.4 4.3 2.4-4.3 2.4z M925 213l4.3 2.4 4.3-2.4" fill="#d8d8d8" stroke="#d8d8d8" stroke-width=".7"/>
  <rect x="925.2" y="220.8" width="5.6" height="4.6" fill="none" stroke="#c8c8c8" stroke-width=".7"/>
  <rect x="927.8" y="223.4" width="5.6" height="4.6" fill="#474747" stroke="#c8c8c8" stroke-width=".7"/>
</svg>

<!-- taskbar -->
<div id="taskbar" class="a"></div>
<svg class="a" style="left:0;top:508px" width="936" height="20" viewBox="0 508 936 20">
  <g fill="#f2f2f2">
    <path d="M7.5 515.2L11.4 514.6V518H7.5Z M11.9 514.5L16 513.9V518H11.9Z M7.5 518.5H11.4V522L7.5 521.4Z M11.9 518.5H16V522.6L11.9 522Z"/>
  </g>
  <g stroke="#e8e8e8" stroke-width="1" fill="none">
    <circle cx="36.5" cy="516.7" r="2.6"/>
    <line x1="34.6" y1="518.7" x2="31.6" y2="521.8"/>
  </g>
  <g fill="none" stroke="#e0e0e0" stroke-width="0.9">
    <rect x="56" y="515" width="4.6" height="6.2"/>
    <line x1="54.2" y1="514.5" x2="54.2" y2="521.8"/>
    <line x1="62.4" y1="514.5" x2="62.4" y2="521.8" stroke-dasharray="1.2 0.8"/>
  </g>
  <path d="M83.5 513.2c-3.2 0-5.2 2.4-5.2 5 0 3.1 2.5 4.6 5.2 4.6 1.6 0 2.8-.4 3.8-1v-2.1c-1 .6-2.2 1-3.4 1-1.7 0-2.9-.9-3-2.3h6.7c.1-.4.2-.9.2-1.4 0-2.3-1.5-3.8-4.3-3.8zm-2.3 3.7c.3-1.1 1.1-1.8 2.2-1.8 1.1 0 1.9.7 1.9 1.8z" fill="#1a86e0"/>
  <path d="M102 514.5h4l1 1.2h5.8v7h-10.8z" fill="#f3d35c"/>
  <path d="M102 516.3h10.8v6.4h-10.8z" fill="#f7df7a"/>
  <path d="M104.2 519.5h6.4v3.2h-1.5v-1.7h-3.4v1.7h-1.5z" fill="#2b9be8"/>
  <path d="M125.3 515.2h11.7v8.1h-11.7z" fill="#f4f4f4"/>
  <path d="M129.2 515.2v-1.5a2 2 0 0 1 4 0v1.5" fill="none" stroke="#f4f4f4" stroke-width="0.9"/>
  <rect x="128.6" y="516.6" width="2.2" height="2.2" fill="#f25022"/><rect x="131.2" y="516.6" width="2.2" height="2.2" fill="#7fba00"/>
  <rect x="128.6" y="519.2" width="2.2" height="2.2" fill="#00a4ef"/><rect x="131.2" y="519.2" width="2.2" height="2.2" fill="#ffb900"/>
  <path d="M149 517.5l6.4-4.3 6.4 4.3v5.2h-12.8z" fill="#f4f4f4"/>
  <path d="M149.6 517.6l5.8 3.2 5.8-3.2" fill="none" stroke="#1a1a1a" stroke-width="0.9"/>
  <path d="M174.6 514.6a1.3 1.3 0 0 1 1.3-1.3h7a1.3 1.3 0 0 1 1.3 1.3v8.3l-2-1.6h-6.3a1.3 1.3 0 0 1-1.3-1.3z" fill="#7289da"/>
  <path d="M176.7 516.3h5.4l.5 2.8c-.8.6-1.7.8-1.7.8l-.4-.5h-2.2l-.4.5s-.9-.2-1.7-.8z" fill="#e8ecf8"/>
  <circle cx="178.2" cy="517.8" r=".5" fill="#7289da"/><circle cx="180.6" cy="517.8" r=".5" fill="#7289da"/>
  <path d="M203.2 514.3c-2.8 0-4.6 2.1-4.6 4.4 0 2.6 2.1 4 4.6 4 1.3 0 2.4-.3 3.3-.9v-1.8c-.9.5-1.9.8-3 .8-1.4 0-2.5-.8-2.6-2h5.9c.1-.3.1-.7.1-1.1 0-2-1.3-3.4-3.7-3.4zm-2 3.3c.3-.9 1-1.6 1.9-1.6s1.6.6 1.7 1.6z" fill="#2bb5ea"/>
  <path d="M199.6 521.5c-1.8 1.2-1.9 2.3-.4 1.9 2.3-.6 7.3-4.2 9.6-7.5 1.3-1.9.8-2.5-1.2-1.7" fill="none" stroke="#f6c416" stroke-width="0.9"/>
  <ellipse cx="226.5" cy="518.5" rx="5.5" ry="4.3" fill="#dfe4ea"/>
  <circle cx="224" cy="517" r=".9" fill="#e04b3a"/><circle cx="226.4" cy="516" r=".9" fill="#38a6d8"/><circle cx="223.6" cy="519.6" r=".9" fill="#58b04a"/>
  <path d="M227.5 522l4.8-7.5 1.2.6-4.6 7.3z" fill="#d99a2a"/>
  <path d="M231.8 513.5l1.3.6-.6 1.2-1.3-.6z" fill="#d55"/>
  <rect x="245" y="512" width="12" height="12" fill="#ffe100"/>
  <ellipse cx="251" cy="517.6" rx="4.4" ry="3.3" fill="#3b2a18"/>
  <path d="M248.6 520l-.8 2 2.4-1.4z" fill="#3b2a18"/>
  <text x="251" y="518.8" font-size="3" font-family="Liberation Sans" font-weight="bold" fill="#ffe100" text-anchor="middle">TALK</text>
  <rect x="263.5" y="508.5" width="23.5" height="19.5" fill="#3d3d3d"/>
  <rect x="269.9" y="513" width="10.4" height="9.2" fill="#2b1902" stroke="#f29a17" stroke-width="0.9"/>
  <text x="275.1" y="520.3" font-size="6.2" font-family="Liberation Sans" font-weight="bold" fill="#f29a17" text-anchor="middle">Ai</text>
  <circle cx="299.1" cy="518" r="5" fill="#2c3035"/>
  <text x="299.1" y="519.8" font-size="4.2" font-family="Liberation Sans" font-weight="bold" fill="#2a7d93" text-anchor="middle">FOX</text>
  <ellipse cx="323" cy="516.6" rx="5.6" ry="3.6" fill="#f0f0f0" stroke="#d23a3a" stroke-width="0.9" transform="rotate(-18 323 516.6)"/>
  <path d="M322.5 519.5l4-2.8 1 3.4-2.2-.4-1.7 2.5z" fill="#2a8fdc"/>
  <g fill="#76b9ed">
    <rect x="73.7" y="526.3" width="19.9" height="1.7"/>
    <rect x="97.4" y="526.3" width="19.9" height="1.7"/>
    <rect x="169.5" y="526.3" width="19.5" height="1.7"/>
    <rect x="193.2" y="526.3" width="19.8" height="1.7"/>
    <rect x="217" y="526.3" width="19.5" height="1.7"/>
    <rect x="241.2" y="526.3" width="19.2" height="1.7"/>
    <rect x="263.8" y="526.3" width="23.2" height="1.7" fill="#99cdf5"/>
    <rect x="289.5" y="526.3" width="19.5" height="1.7"/>
    <rect x="313.2" y="526.3" width="19.8" height="1.7"/>
  </g>
  <!-- tray -->
  <g fill="none" stroke="#dedede" stroke-width=".8">
    <circle cx="814.8" cy="517.2" r="1.1"/><path d="M812.6 521.6c.1-1.7.9-2.7 2.2-2.7s2.1 1 2.2 2.7"/>
    <circle cx="817.6" cy="515" r="1.1"/><path d="M816.6 517.1c.3-.6.6-.9 1-.9 1.3 0 2.1 1 2.2 2.7"/>
    <path d="M830.5 519.6l3-3 3 3" stroke-width=".9"/>
    <path d="M853.3 517.2h1.4l2.2-1.9v5.6l-2.2-1.9h-1.4z"/>
    <path d="M858.2 517l2.2 2.3m0-2.3l-2.2 2.3"/>
  </g>
  <path d="M842.2 521.7a6.6 6.6 0 0 1 6.6-6.6v6.6z" fill="#9a9a9a"/>
  <path d="M842.2 521.7a6.6 6.6 0 0 1 6.6-6.6M844 521.7a4.8 4.8 0 0 1 4.8-4.8M845.8 521.7a3 3 0 0 1 3-3" fill="none" stroke="#d8d8d8" stroke-width=".6"/>
  <text x="864.6" y="521.4" font-size="6.6" fill="#e0e0e0" font-family="Liberation Sans">가</text>
  <text x="878.5" y="515.9" font-size="6" fill="#e8e8e8" font-family="Liberation Sans" textLength="28.5" lengthAdjust="spacingAndGlyphs">오전 12:07</text>
  <text x="876.7" y="524.6" font-size="6" fill="#e8e8e8" font-family="Liberation Sans" textLength="32" lengthAdjust="spacingAndGlyphs">2019-01-25</text>
  <rect x="918.3" y="514.1" width="8.1" height="6.4" fill="#f0f0f0"/>
  <path d="M919.4 516h5.8M919.4 517.8h5.8" stroke="#777" stroke-width=".5"/>
  <circle cx="926.4" cy="521.9" r="4" fill="#1b1b1b" stroke="#bbb" stroke-width=".6"/>
  <text x="926.4" y="523.8" font-size="5" font-weight="bold" fill="#f4f4f4" font-family="Liberation Sans" text-anchor="middle">10</text>
</svg>

<!-- overlays -->
<div id="menu" class="a"></div>
<div class="a" style="left:125.8px;top:114px;width:112px;height:7.9px;background:#0078d7"></div>
<div class="m" style="left:135.4px;top:14.96px">Apply Scribble</div>
<div class="m" style="left:135.4px;top:24.76px">Scribble...</div>
<div class="m" style="left:135.4px;top:38.06px">Document Raster Effects Settings...</div>
<div class="m g" style="left:135.4px;top:51.86px">Illustrator Effects</div>
<div class="m" style="left:140.2px;top:60.66px">3D</div>
<div class="a" style="left:233.5px;top:61.5px;border-top:2.1px solid transparent;border-bottom:2.1px solid transparent;border-left:2.6px solid #1a1a1a"></div>
<div class="m" style="left:140.2px;top:68.56px">Convert to Shape</div>
<div class="a" style="left:233.5px;top:69.4px;border-top:2.1px solid transparent;border-bottom:2.1px solid transparent;border-left:2.6px solid #1a1a1a"></div>
<div class="m" style="left:140.2px;top:76.46px">Crop Marks</div>
<div class="m" style="left:140.2px;top:84.06px">Distort &amp; Transform</div>
<div class="a" style="left:233.5px;top:84.9px;border-top:2.1px solid transparent;border-bottom:2.1px solid transparent;border-left:2.6px solid #1a1a1a"></div>
<div class="m" style="left:140.2px;top:91.96px">Path</div>
<div class="a" style="left:233.5px;top:92.8px;border-top:2.1px solid transparent;border-bottom:2.1px solid transparent;border-left:2.6px solid #1a1a1a"></div>
<div class="m" style="left:140.2px;top:99.86px">Pathfinder</div>
<div class="a" style="left:233.5px;top:100.7px;border-top:2.1px solid transparent;border-bottom:2.1px solid transparent;border-left:2.6px solid #1a1a1a"></div>
<div class="m" style="left:140.2px;top:107.66px">Rasterize...</div>
<div class="m" style="left:140.2px;top:115.56px;color:#fff">Stylize</div>
<div class="a" style="left:233.5px;top:116.4px;border-top:2.1px solid transparent;border-bottom:2.1px solid transparent;border-left:2.6px solid #fff"></div>
<div class="m" style="left:140.2px;top:123.26px">SVG Filters</div>
<div class="a" style="left:233.5px;top:124.1px;border-top:2.1px solid transparent;border-bottom:2.1px solid transparent;border-left:2.6px solid #1a1a1a"></div>
<div class="m" style="left:140.2px;top:130.96px">Warp</div>
<div class="a" style="left:233.5px;top:131.8px;border-top:2.1px solid transparent;border-bottom:2.1px solid transparent;border-left:2.6px solid #1a1a1a"></div>
<div class="m g" style="left:135.4px;top:143.96px">Photoshop Effects</div>
<div class="m" style="left:140.2px;top:152.56px">Effect Gallery...</div>
<div class="m" style="left:140.2px;top:160.36px">Artistic</div>
<div class="a" style="left:233.5px;top:161.2px;border-top:2.1px solid transparent;border-bottom:2.1px solid transparent;border-left:2.6px solid #1a1a1a"></div>
<div class="m" style="left:140.2px;top:168.06px">Blur</div>
<div class="a" style="left:233.5px;top:168.9px;border-top:2.1px solid transparent;border-bottom:2.1px solid transparent;border-left:2.6px solid #1a1a1a"></div>
<div class="m" style="left:140.2px;top:175.96px">Brush Strokes</div>
<div class="a" style="left:233.5px;top:176.8px;border-top:2.1px solid transparent;border-bottom:2.1px solid transparent;border-left:2.6px solid #1a1a1a"></div>
<div class="m" style="left:140.2px;top:183.76px">Distort</div>
<div class="a" style="left:233.5px;top:184.6px;border-top:2.1px solid transparent;border-bottom:2.1px solid transparent;border-left:2.6px solid #1a1a1a"></div>
<div class="m" style="left:140.2px;top:191.66px">Pixelate</div>
<div class="a" style="left:233.5px;top:192.5px;border-top:2.1px solid transparent;border-bottom:2.1px solid transparent;border-left:2.6px solid #1a1a1a"></div>
<div class="m" style="left:140.2px;top:199.36px">Sketch</div>
<div class="a" style="left:233.5px;top:200.2px;border-top:2.1px solid transparent;border-bottom:2.1px solid transparent;border-left:2.6px solid #1a1a1a"></div>
<div class="m" style="left:140.2px;top:207.16px">Stylize</div>
<div class="a" style="left:233.5px;top:208.0px;border-top:2.1px solid transparent;border-bottom:2.1px solid transparent;border-left:2.6px solid #1a1a1a"></div>
<div class="m" style="left:140.2px;top:215.06px">Texture</div>
<div class="a" style="left:233.5px;top:215.9px;border-top:2.1px solid transparent;border-bottom:2.1px solid transparent;border-left:2.6px solid #1a1a1a"></div>
<div class="m" style="left:140.2px;top:222.86px">Video</div>
<div class="a" style="left:233.5px;top:223.7px;border-top:2.1px solid transparent;border-bottom:2.1px solid transparent;border-left:2.6px solid #1a1a1a"></div>
<div class="m" style="left:196px;top:14.96px">Shift+Ctrl+E</div>
<div class="m" style="left:187px;top:24.76px">Alt+Shift+Ctrl+E</div>
<div class="a" style="left:128px;top:33.2px;width:109px;height:1px;background:#d7d7d7"></div>
<div class="a" style="left:128px;top:46.9px;width:109px;height:1px;background:#d7d7d7"></div>
<div class="a" style="left:128px;top:139.3px;width:109px;height:1px;background:#d7d7d7"></div>
<div id="sub" class="a"></div>
<div class="a" style="left:239px;top:168px;width:85px;height:10.8px;background:#91c9f7"></div>
<div class="m" style="left:254.7px;top:116.96px">Drop Shadow...</div>
<div class="m" style="left:254.7px;top:127.76px">Feather...</div>
<div class="m" style="left:254.7px;top:138.26px">Inner Glow...</div>
<div class="m" style="left:254.7px;top:149.06px">Outer Glow...</div>
<div class="m" style="left:254.7px;top:159.96px">Round Corners...</div>
<div class="m" style="left:254.7px;top:170.66px">Scribble...</div>
</body></html>
